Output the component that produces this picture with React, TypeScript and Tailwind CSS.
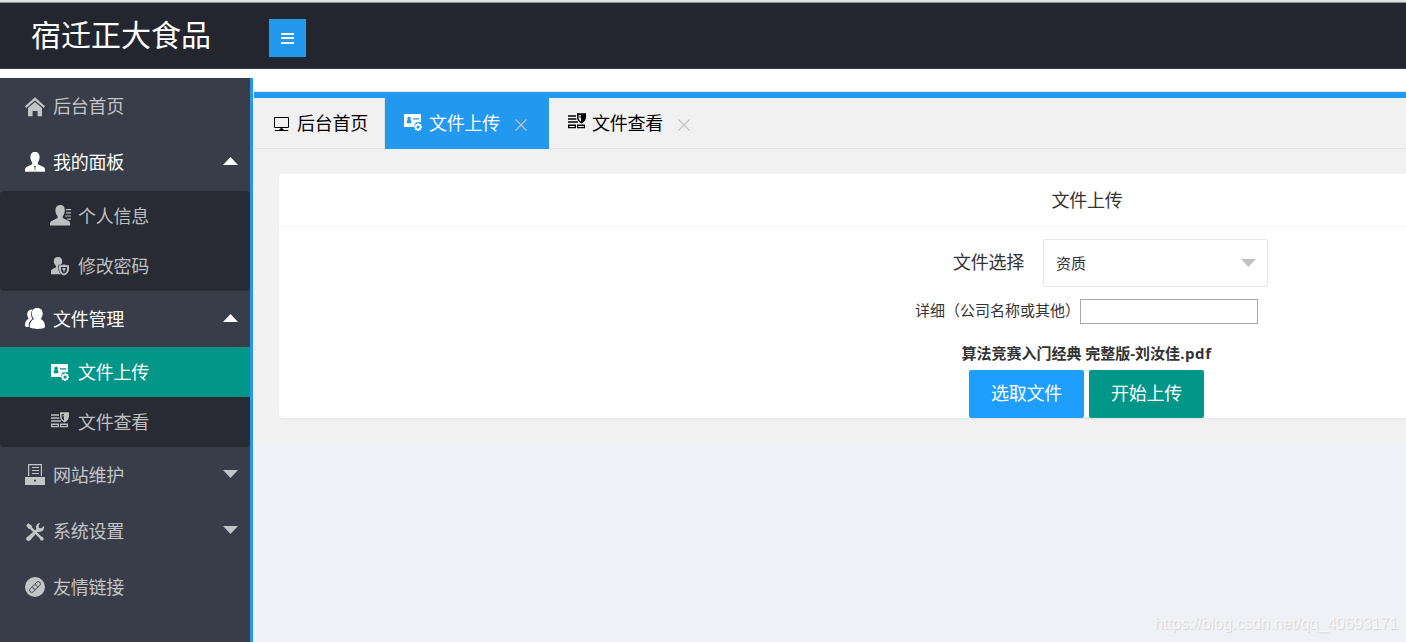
import React from "react";

type IconProps = { className?: string };

const HomeIcon = ({ className }: IconProps) => (
  <svg viewBox="0 0 20 20" className={className} fill="currentColor">
    <path d="M10 0.3 20 9.2 18.8 11 10 3.4 1.2 11 0 9.2Z" />
    <path d="M10 5 17 11V19.2H12.6V14H7.6V19.2H3V11Z" />
  </svg>
);

const UserIcon = ({ className }: IconProps) => (
  <svg viewBox="0 0 20 20" className={className} fill="currentColor">
    <path d="M10 0C13.2 0 14.6 2.1 14.6 5C14.6 7.8 13.6 9.4 12.8 10.4V12.3L18.6 15Q20 15.8 20 17.5V19.7H11.2L10.7 15 11 13.9H9L9.3 15 8.8 19.7H0V17.5Q0 15.8 1.4 15L7.2 12.3V10.4C6.4 9.4 5.4 7.8 5.4 5C5.4 2.1 6.8 0 10 0Z" />
    <path d="M9.6 15H10.4L11 19.7H9Z" />
  </svg>
);

const ProfileIcon = ({ className }: IconProps) => (
  <svg viewBox="0 0 20 20" className={className} fill="currentColor">
    <path d="M9.8 0C13 0 14.3 2.2 14.1 5.4C13.9 8 13.1 9.5 12.2 10.5V12.4L17.9 15.2Q19.2 16 19.2 17.7V19.6H0V17.7Q0 16 1.4 15.2L7.2 12.4V10.5C6.2 9.5 5.3 8 5.2 5.4C5.1 2.2 6.6 0 9.8 0Z" />
    <path d="M15.2 3.9H20V5H15.2ZM15.2 6.9H20V8H15.2ZM14.4 9.9H20V11H14.4ZM16.4 12.9H20V14H16.4Z" />
  </svg>
);

const PasswordIcon = ({ className }: IconProps) => (
  <svg viewBox="0 0 20 20" className={className} fill="currentColor">
    <path d="M8 1C11 1 12.2 2.8 12.2 5.2C12.2 6.8 11.8 7.8 11 8.8H8.4V13.5Q8.6 16.8 11 18.3H1V15Q1.2 13.4 3 12.7L6 11.3V9.8C4.6 8.8 3.8 7.4 3.8 5.2C3.8 2.6 5.2 1 8 1Z" />
    <path
      fillRule="evenodd"
      d="M9 9.2C11.3 9.2 12.9 8.8 14 8.2C15.1 8.8 16.7 9.2 19 9.2V13C19 16.2 17.2 18.3 14 19.4C10.8 18.3 9 16.2 9 13ZM11 11V13.2C11 15.3 12.1 16.7 14 17.6C15.9 16.7 17 15.3 17 13.2V11Z"
    />
    <path d="M12.4 12H15.6V13.6L14.6 14.3V15.8H13.4V14.3L12.4 13.6Z" />
  </svg>
);

const GroupIcon = ({ className }: IconProps) => (
  <svg viewBox="0 0 20 21" className={className} fill="currentColor">
    <path d="M6.6 1.6C3.5 1.8 2.2 3.8 2.2 6.2C2.2 8.2 3 9.6 3.8 10.8C1.3 12 0 14 0 17.5C0 18.7 1.5 19 3.9 19C3.2 15.2 4.8 12.4 7.6 11C6.6 9.6 6.1 8 6.1 6C6.1 4.3 6.6 2.9 7.6 1.7Z" />
    <path d="M12.2 0C16 0 17.7 2.3 17.7 5.6C17.7 8 16.8 9.7 15.7 11C18.6 12.4 20 15 20 18.6C20 20.4 17 21 12.3 21C7.6 21 4.7 20.4 4.7 18.6C4.7 15 6.2 12.4 9 11C7.8 9.7 6.8 8 6.8 5.6C6.8 2.3 8.5 0 12.2 0Z" />
  </svg>
);

const UploadIcon = ({ className }: IconProps) => (
  <svg viewBox="0 0 18 17" className={className} fill="currentColor">
    <path
      fillRule="evenodd"
      d="M0.6 0H16.4Q17 0 17 0.6V8.2H12.2L10.4 10.4V13H0.6Q0 13 0 12.4V0.6Q0 0 0.6 0ZM9 4.2V5.6H15.4V4.2ZM5 2.8A1.6 1.6 0 0 0 3.8 5.6L2.8 7.2V9.2H7.4V7.2L6.3 5.6A1.6 1.6 0 0 0 5 2.8Z"
    />
    <path
      fillRule="evenodd"
      d="M13.5 9.2H15.1L15.4 10.3 16.5 9.9 17.5 11.1 16.9 12 18 12.6V13.8L16.9 14.3 17.3 15.3 16.1 16.4 15.1 15.9 14.7 17H13.3L12.8 15.9 11.8 16.3 10.7 15.2 11.3 14.2 10.2 13.7V12.4L11.3 12 10.9 11 12.1 9.9 13.1 10.3ZM14.1 11.5A1.6 1.6 0 1 0 14.1 14.7A1.6 1.6 0 1 0 14.1 11.5Z"
    />
  </svg>
);

const ViewIcon = ({ className }: IconProps) => (
  <svg viewBox="0 0 18 16" className={className} fill="currentColor">
    <path d="M0 2.2H8V3.8H0ZM0 5.2H8.4V6.8H0ZM0 8.2H10V9.8H0Z" />
    <path fillRule="evenodd" d="M0 11.6H8V15.2H0ZM1.3 13V14H6.8V13ZM9 11.6H17V15.2H9ZM10.2 13V14H15.8V13Z" />
    <path fillRule="evenodd" d="M9 0.3H18V4C18 7 16.4 9 13.5 10.4C10.6 9 9 7 9 4ZM10.6 2V4.4C10.6 6.4 11.5 7.6 13 8.6V2Z" />
    <path d="M11.3 2.8H13V4.8H11.3Z" opacity="0.6" />
  </svg>
);

const SiteIcon = ({ className }: IconProps) => (
  <svg viewBox="0 0 20 21" className={className} fill="currentColor">
    <path d="M3 0H17V12H15.8V1.2H4.2V12H3Z" />
    <path d="M7 3H14V4.1H7ZM7 6H14V7.1H7ZM7 9H14V10.1H7Z" />
    <path fillRule="evenodd" d="M0 13H20V21H0ZM9 15.8V17.6H11V15.8Z" />
  </svg>
);

const ToolsIcon = ({ className }: IconProps) => (
  <svg viewBox="0 0 20 20" className={className} fill="currentColor">
    <path d="M1.2 3.2 3.2 1.2 6.6 3.4 7.1 5.4 16.4 14.4 17.8 15Q19.4 16.8 18.3 18Q16.8 19.4 15.3 17.8L14.6 16.2 5.3 7.2 3.4 6.6Z" />
    <path d="M15.3 1.1Q11.5 1.3 11 5L11.3 7.2 3.2 14.2Q0.8 15.3 1 17.3Q2.3 19.7 5 18.6L12.4 10Q18.5 10.4 19 6.1V3.7L16.4 6.3 13.9 5.9 13.6 3.6Z" />
  </svg>
);

const LinkIcon = ({ className }: IconProps) => (
  <svg viewBox="0 0 20 20" className={className}>
    <circle cx="10" cy="10" r="10" fill="currentColor" />
    <g fill="none" stroke="#393d49" strokeWidth="0.9" transform="rotate(-45 10 10)">
      <path d="M8.4 12.2H5.5A2.2 2.2 0 0 1 5.5 7.8H10.2A2.2 2.2 0 0 1 11.4 11.8" />
      <path d="M11.6 7.8H14.5A2.2 2.2 0 0 1 14.5 12.2H9.8A2.2 2.2 0 0 1 8.6 8.2" />
    </g>
  </svg>
);

const MonitorIcon = ({ className }: IconProps) => (
  <svg viewBox="0 0 16 15" className={className} fill="none" stroke="currentColor">
    <path d="M0.5 0.5H14.5V10.5H0.5Z" />
    <path d="M7.5 11V14" strokeWidth="2" />
    <path d="M5.5 12.5H9.5M0.8 13.5H14.2" strokeWidth="1.1" />
  </svg>
);

const Caret = ({ up, className }: { up?: boolean; className?: string }) => (
  <svg viewBox="0 0 15 8" className={`h-2 w-[15px] ${className ?? ""}`} fill="currentColor">
    <path d={up ? "M0 8 7.5 0 15 8Z" : "M0 0H15L7.5 8Z"} />
  </svg>
);

const CloseIcon = ({ className }: IconProps) => (
  <svg viewBox="0 0 12 12" className={`h-3 w-3 ${className ?? ""}`} fill="none" stroke="currentColor" strokeWidth="1.1">
    <path d="M0.5 0.5 11.5 11.5M11.5 0.5 0.5 11.5" />
  </svg>
);

type ItemProps = {
  icon: React.ReactNode;
  label: string;
  arrow?: "up" | "down";
};

const TopItem = ({ icon, label, arrow }: ItemProps) => (
  <button
    className={`flex h-14 w-full shrink-0 items-center pr-3 pl-[25px] tracking-[-0.25px] ${arrow === "up" ? "text-white" : "text-[#c4c5c8]"}`}
  >
    {icon}
    <span className="ml-2">{label}</span>
    {arrow && <Caret up={arrow === "up"} className="mb-0.5 ml-auto" />}
  </button>
);

const SubItem = ({ icon, label, active }: ItemProps & { active?: boolean }) => (
  <button
    className={`flex h-[50px] w-full items-center pl-[50px] tracking-[-0.25px] ${active ? "bg-[#009688] text-white" : "text-[#bebfc1]"}`}
  >
    <span className="flex w-5 justify-center">{icon}</span>
    <span className="ml-2">{label}</span>
  </button>
);

const Sidebar = () => (
  <nav className="flex w-[253px] shrink-0 flex-col border-r-[3px] border-[#2299ee] bg-[#393d49]">
    <TopItem icon={<HomeIcon className="mt-px size-5" />} label="后台首页" />
    <TopItem icon={<UserIcon className="size-5" />} label="我的面板" arrow="up" />
    <div className="mt-px rounded-sm bg-[#282b33]">
      <SubItem icon={<ProfileIcon className="mb-px size-[21px] shrink-0" />} label="个人信息" />
      <SubItem icon={<PasswordIcon className="size-5" />} label="修改密码" />
    </div>
    <TopItem icon={<GroupIcon className="mb-px h-[21px] w-5" />} label="文件管理" arrow="up" />
    <div className="rounded-sm bg-[#282b33]">
      <SubItem icon={<UploadIcon className="h-[17px] w-[18px]" />} label="文件上传" active />
      <SubItem icon={<ViewIcon className="mb-1 h-4 w-[18px]" />} label="文件查看" />
    </div>
    <TopItem icon={<SiteIcon className="mb-px h-[21px] w-5" />} label="网站维护" arrow="down" />
    <TopItem icon={<ToolsIcon className="mt-0.5 size-5" />} label="系统设置" arrow="down" />
    <TopItem icon={<LinkIcon className="size-5" />} label="友情链接" />
  </nav>
);

const Tabs = () => (
  <div className="flex h-[57px] shrink-0 border-t-[6px] border-b border-t-[#2299ee] border-b-[#e2e2e2] bg-[#f1f1f1] tracking-[-0.25px] text-black">
    <button className="flex w-[131px] items-center border-r border-[#e2e2e2] pl-5">
      <MonitorIcon className="mt-0.5 h-[15px] w-4" />
      <span className="ml-[7px]">后台首页</span>
    </button>
    <button className="-mb-px flex w-[164px] items-center bg-[#2299ee] pb-px pl-[19px] text-white">
      <UploadIcon className="mb-px h-[17px] w-[18px]" />
      <span className="ml-[7px]">文件上传</span>
      <CloseIcon className="mt-1 ml-[15px] text-[#c2c2c2]" />
    </button>
    <button className="flex items-center pl-[19px]">
      <ViewIcon className="mb-1 h-4 w-[18px]" />
      <span className="ml-[6px]">文件查看</span>
      <CloseIcon className="mt-1 ml-[15px] text-[#c2c2c2]" />
    </button>
  </div>
);

const UploadCard = () => (
  <section className="h-[244px] w-[1616px] shrink-0 rounded-sm bg-white text-[#333] shadow-[0_1px_2px_rgba(0,0,0,0.05)]">
    <h2 className="flex h-[53px] items-center justify-center border-b border-[#f6f6f6] tracking-[-0.25px]">文件上传</h2>
    <div className="flex flex-col items-center pr-px">
      <div className="mt-3 ml-12 flex h-12 items-center">
        <label className="mb-0.5 w-[72px] tracking-[-0.25px] whitespace-nowrap">文件选择</label>
        <div className="ml-[18px] flex h-12 w-[225px] items-center justify-between rounded-xs border border-[#e6e6e6] pr-[11px] pl-3 text-[15px]">
          资质
          <Caret className="text-[#c2c2c2]" />
        </div>
      </div>
      <div className="mt-3 flex h-[25px] items-center text-[15px]">
        <label className="mb-[3px] w-[165px] whitespace-nowrap">详细（公司名称或其他）</label>
        <input className="h-[25px] w-[178px] border border-[#a9a9a9] bg-white" />
      </div>
      <p className="mt-[17px] h-6 text-[15px] leading-6 font-bold">
        算法竞赛入门经典 完整版-刘汝佳<span className="tracking-[0.6px]">.pdf</span>
      </p>
      <div className="mt-[5px] flex gap-[5px] tracking-[-0.25px] text-white">
        <button className="h-12 w-[115px] rounded-xs bg-[#1e9fff] pb-0.5">选取文件</button>
        <button className="h-12 w-[115px] rounded-xs bg-[#009688] pb-0.5">开始上传</button>
      </div>
    </div>
  </section>
);

export default function App() {
  return (
    <div className="relative flex h-[642px] w-[1406px] flex-col overflow-hidden bg-white font-['Open_Sans','Noto_Sans_CJK_SC',sans-serif] text-[18px] leading-6">
      <div className="h-[3px] shrink-0 border-b border-[#8e8f92] bg-[#e1e1e1]" />
      <header className="flex h-[66px] shrink-0 items-center border-b border-[#393d49] bg-[#23262e]">
        <h1 className="mb-0.5 ml-[31px] w-[238px] text-[30px] leading-10 text-white">宿迁正大食品</h1>
        <button className="mt-[5px] flex h-[38px] w-[37px] flex-col items-center justify-center gap-[2.5px] bg-[#2299ee]">
          <i className="h-0.5 w-[13px] bg-white" />
          <i className="h-0.5 w-[13px] bg-white" />
          <i className="h-0.5 w-[13px] bg-white" />
        </button>
      </header>
      <div className="mt-[9px] flex min-h-0 flex-1">
        <Sidebar />
        <main className="ml-px flex min-w-0 flex-1 flex-col overflow-hidden pt-[13px]">
          <div className="h-px shrink-0 bg-[#e6e6e6]" />
          <Tabs />
          <div className="flex min-h-0 flex-1 flex-col bg-[#f0f1f6]">
            <div className="flex bg-[#f1f1f1] pt-[25px] pb-6 pl-[25px]">
              <UploadCard />
            </div>
          </div>
        </main>
      </div>
      <span className="absolute right-2 bottom-2 font-['Liberation_Sans',sans-serif] text-[16px] leading-5 tracking-[-0.06px] text-[#f6f6f9] [text-shadow:1px_1px_1px_#d2d3d7]">
        https://blog.csdn.net/qq_40693171
      </span>
    </div>
  );
}
